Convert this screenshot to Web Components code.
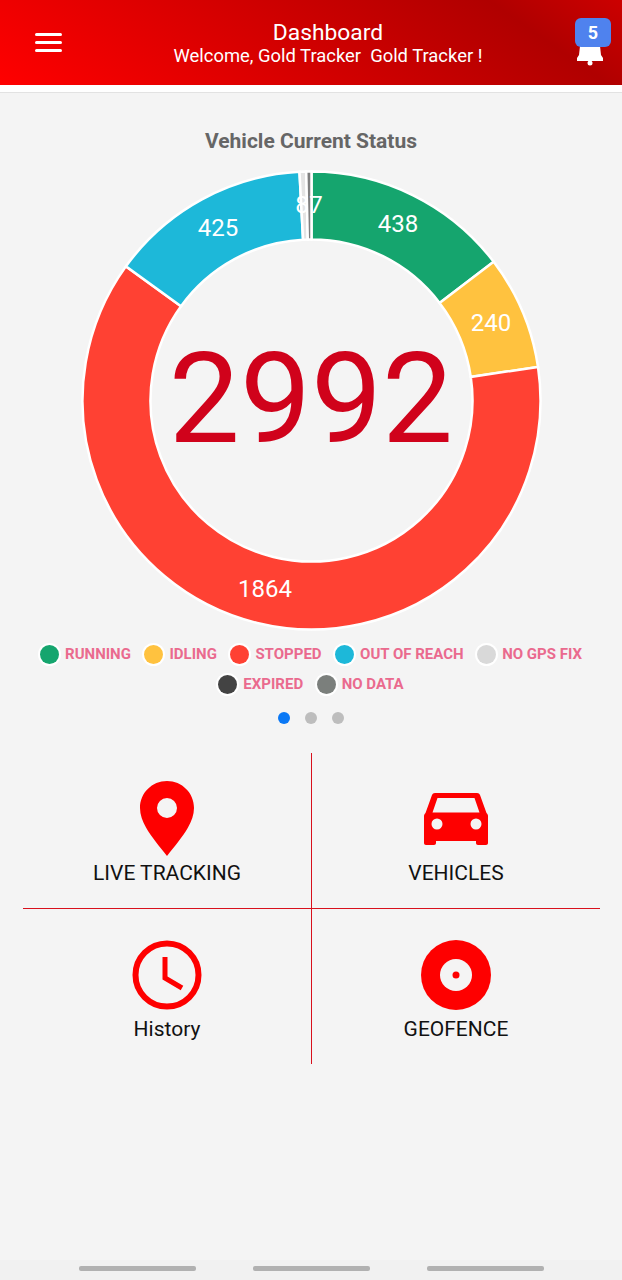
<!DOCTYPE html>
<html lang="en">
<head>
<meta charset="utf-8">
<title>Dashboard</title>
<style>
    html, body {
        margin: 0;
        padding: 0;
    }
    body {
        width: 622px;
        height: 1280px;
        overflow: hidden;
        background: #f4f4f4;
        font-family: Roboto, "Liberation Sans", sans-serif;
        display: flex;
        flex-direction: column;
    }
</style>
</head>
<body>
<app-header title-text="Dashboard" sub-text="Welcome, Gold Tracker  Gold Tracker !" count="5"></app-header>
<status-chart></status-chart>
<status-legend></status-legend>
<pager-dots></pager-dots>
<tile-grid>
    <tile-item label="LIVE TRACKING">
        <svg width="54" height="75" viewBox="0 0 54 75">
            <path fill="#fe0000" fill-rule="evenodd" d="M27 0C12 0 0 12 0 27c0 7 2.500 13 6 19.500C11 55.500 20 66 27 75c7-9 16-19.500 21-28.500 3.500-6.500 6-12.500 6-19.500C54 12 42 0 27 0zm0 17a10 10 0 1 1 0 20 10 10 0 0 1 0-20z"/>
        </svg>
    </tile-item>
    <tile-item label="VEHICLES">
        <svg style="display:block;margin-bottom:11px" width="64" height="52" viewBox="0 0 64 52">
            <path fill="#fe0000" fill-rule="evenodd" d="M11 0h42c1.500 0 2.500.800 3 2l6.500 18c1 .800 1.500 2 1.500 3v27c0 1.200-.800 2-2 2h-8c-1.200 0-2-.800-2-2v-2H12v2c0 1.200-.800 2-2 2H2c-1.200 0-2-.800-2-2V23c0-1 .500-2.200 1.500-3L8 2c.500-1.200 1.500-2 3-2zm2.500 5L8.500 19.500h47L50.500 5h-37zM13 25.500a5.500 5.500 0 1 0 0 11 5.500 5.500 0 0 0 0-11zm39 0a5.500 5.500 0 1 0 0 11 5.500 5.500 0 0 0 0-11z"/>
        </svg>
    </tile-item>
    <tile-item label="History" low>
        <svg width="70" height="70" viewBox="0 0 70 70">
            <circle cx="35" cy="35" r="31.500" fill="none" stroke="#fe0000" stroke-width="6"/>
            <path fill="none" stroke="#fe0000" stroke-width="5" d="M33 17v21l17 10"/>
        </svg>
    </tile-item>
    <tile-item label="GEOFENCE" low>
        <svg width="70" height="70" viewBox="0 0 70 70">
            <circle cx="35" cy="35" r="35" fill="#fe0000"/>
            <circle cx="35" cy="35" r="16" fill="#f4f4f4"/>
            <circle cx="35" cy="35" r="3.500" fill="#fe0000"/>
        </svg>
    </tile-item>
</tile-grid>
<nav-hints></nav-hints>

<script>
// top red bar
class appHeader extends HTMLElement {
    constructor() {
        super();
        this.attachShadow({ mode: 'open' });
        this.shadowRoot.innerHTML = `
            <style>
                :host {
                    display: block;
                    flex: none;
                    border-bottom: 1px solid #e2e2e2;
                    background: #fff;
                    padding-bottom: 7px;
                }
                .bar {
                    height: 85px;
                    display: flex;
                    align-items: center;
                    padding: 0 11px 0 35px;
                    color: #fff;
                    background: linear-gradient(215deg, #cc0000 0%, #b00000 18%, #ff0000 100%);
                }
                .menu {
                    width: 27px;
                    display: flex;
                    flex-direction: column;
                    gap: 5px;
                    margin-top: -1px;
                }
                .menu i {
                    display: block;
                    height: 3px;
                    border-radius: 1.500px;
                    background: #fff;
                }
                .titles {
                    flex: 1;
                    text-align: center;
                    padding-left: 19px;
                    margin-top: 1px;
                }
                .title {
                    font-size: 22.800px;
                    line-height: 25px;
                }
                .sub {
                    font-size: 18.400px;
                    line-height: 21px;
                    white-space: pre;
                }
                .bell {
                    width: 36px;
                    height: 48px;
                    position: relative;
                    margin-top: -1px;
                }
                .bell svg {
                    position: absolute;
                    left: 2px;
                    top: 28px;
                }
                .badge {
                    position: absolute;
                    left: 0;
                    top: 0;
                    width: 36px;
                    height: 29px;
                    border-radius: 6px;
                    background: #4f82ee;
                    font-size: 18px;
                    font-weight: 700;
                    line-height: 29px;
                    text-align: center;
                }
            </style>
            <div class="bar">
                <div class="menu"><i></i><i></i><i></i></div>
                <div class="titles">
                    <div class="title"></div>
                    <div class="sub"></div>
                </div>
                <div class="bell">
                    <svg width="26" height="20" viewBox="0 0 26 20">
                        <path fill="#fff" d="M3 0h20l1 9 2 3v3H0v-3l2-3z"/>
                        <circle cx="13" cy="17" r="2.500" fill="#fff"/>
                    </svg>
                    <div class="badge"></div>
                </div>
            </div>
        `;
    }

    connectedCallback() {
        this.shadowRoot.querySelector('.title').textContent = this.getAttribute('title-text');
        this.shadowRoot.querySelector('.sub').textContent = this.getAttribute('sub-text');
        this.shadowRoot.querySelector('.badge').textContent = this.getAttribute('count');
    }
}
customElements.define('app-header', appHeader);

// heading + donut
class statusChart extends HTMLElement {
    constructor() {
        super();
        this.attachShadow({ mode: 'open' });

        // x/y of the labels are page coordinates, same as the viewBox below
        const slices = [
            { value: 438, color: '#15a56e', label: '438', x: 398, y: 224 },
            { value: 240, color: '#ffc23f', label: '240', x: 491, y: 323 },
            { value: 1864, color: '#ff4133', label: '1864', x: 265, y: 589 },
            { value: 425, color: '#1db8d9', label: '425', x: 218, y: 228 },
            { value: 14, color: '#e4e4e4', label: '8', x: 302, y: 205 },
            { value: 11, color: '#7f7f7f', label: '7', x: 316, y: 205 },
        ];
        const total = 2992;
        const cx = 311.5;
        const cy = 400.5;
        const outer = 229;
        const inner = 161;
        const pt = (r, a) => `${(cx + r * Math.sin(a)).toFixed(2)} ${(cy - r * Math.cos(a)).toFixed(2)}`;

        let start = 0;
        let paths = '';
        let labels = '';
        slices.forEach((s) => {
            const end = start + (s.value / total) * Math.PI * 2;
            const big = end - start > Math.PI ? 1 : 0;
            paths += `<path fill="${s.color}" stroke="#fff" stroke-width="2.500"
                d="M${pt(outer, start)} A${outer} ${outer} 0 ${big} 1 ${pt(outer, end)}
                   L${pt(inner, end)} A${inner} ${inner} 0 ${big} 0 ${pt(inner, start)}Z"/>`;
            labels += `<text x="${s.x}" y="${s.y}" dy=".35em">${s.label}</text>`;
            start = end;
        });

        this.shadowRoot.innerHTML = `
            <style>
                :host {
                    display: block;
                    flex: none;
                }
                h2 {
                    margin: 0;
                    padding-top: 36px;
                    height: 23px;
                    font-size: 21px;
                    line-height: 24px;
                    font-weight: 700;
                    text-align: center;
                    color: #666;
                }
                svg {
                    display: block;
                }
                text {
                    font-family: Roboto, "Liberation Sans", sans-serif;
                    font-size: 24px;
                    fill: #fff;
                    text-anchor: middle;
                }
                text.total {
                    font-size: 126.500px;
                    fill: #d0021b;
                }
            </style>
            <h2>Vehicle Current Status</h2>
            <svg width="622" height="487" viewBox="0 152 622 487">
                ${paths}
                ${labels}
                <text class="total" x="311" y="442">2992</text>
            </svg>
        `;
    }
}
customElements.define('status-chart', statusChart);

// legend below the donut
class statusLegend extends HTMLElement {
    constructor() {
        super();
        this.attachShadow({ mode: 'open' });

        const items = [
            ['RUNNING', '#15a56e'],
            ['IDLING', '#ffc23f'],
            ['STOPPED', '#ff4133'],
            ['OUT OF REACH', '#1db8d9'],
            ['NO GPS FIX', '#d9d9d9'],
            ['EXPIRED', '#434343'],
            ['NO DATA', '#7b7f7c'],
        ];

        this.shadowRoot.innerHTML = `
            <style>
                :host {
                    display: flex;
                    flex: none;
                    flex-wrap: wrap;
                    justify-content: center;
                    gap: 0 13.500px;
                    width: 580px;
                    margin: 0 auto;
                }
                .item {
                    display: flex;
                    align-items: center;
                    gap: 6px;
                    height: 30px;
                    font-size: 15px;
                    font-weight: 700;
                    color: #ea6a8e;
                }
                .dot {
                    width: 19px;
                    height: 19px;
                    border-radius: 50%;
                    box-shadow: 0 0 0 2px #fff;
                }
            </style>
            ${items.map(([name, color]) => `
                <div class="item"><span class="dot" style="background:${color}"></span>${name}</div>
            `).join('')}
        `;
    }
}
customElements.define('status-legend', statusLegend);

// carousel dots
class pagerDots extends HTMLElement {
    constructor() {
        super();
        this.attachShadow({ mode: 'open' });
        this.shadowRoot.innerHTML = `
            <style>
                :host {
                    display: flex;
                    flex: none;
                    justify-content: center;
                    gap: 15px;
                    margin-top: 13px;
                }
                i {
                    width: 12px;
                    height: 12px;
                    border-radius: 50%;
                    background: #bdbdbd;
                }
                i:first-of-type {
                    background: #0a78f5;
                }
            </style>
            <i></i><i></i><i></i>
        `;
    }
}
customElements.define('pager-dots', pagerDots);

// the 2x2 cross
class tileGrid extends HTMLElement {
    constructor() {
        super();
        this.attachShadow({ mode: 'open' });
        this.shadowRoot.innerHTML = `
            <style>
                :host {
                    display: grid;
                    flex: none;
                    grid-template-columns: 289px 288px;
                    grid-template-rows: 156px 155px;
                    width: 577px;
                    margin: 29px 0 0 23px;
                }
                ::slotted(:nth-child(odd)) {
                    border-right: 1px solid #d8101c;
                }
                ::slotted(:nth-child(-n+2)) {
                    border-bottom: 1px solid #d8101c;
                }
            </style>
            <slot></slot>
        `;
    }
}
customElements.define('tile-grid', tileGrid);

class tileItem extends HTMLElement {
    constructor() {
        super();
        this.attachShadow({ mode: 'open' });
        this.shadowRoot.innerHTML = `
            <style>
                :host {
                    display: flex;
                    flex-direction: column;
                    align-items: center;
                    justify-content: flex-end;
                    box-sizing: border-box;
                    padding-bottom: 23px;
                    color: #111;
                }
                :host([low]) {
                    justify-content: flex-start;
                    padding: 31px 0 0;
                }
                .icon {
                    flex: none;
                    line-height: 0;
                }
                .label {
                    font-size: 21px;
                    line-height: 24px;
                    margin-top: 5px;
                }
                :host([low]) .label {
                    margin-top: 7px;
                }
            </style>
            <div class="icon"><slot></slot></div>
            <div class="label"></div>
        `;
    }

    connectedCallback() {
        this.shadowRoot.querySelector('.label').textContent = this.getAttribute('label');
    }
}
customElements.define('tile-item', tileItem);

// grey bars at the very bottom
class navHints extends HTMLElement {
    constructor() {
        super();
        this.attachShadow({ mode: 'open' });
        this.shadowRoot.innerHTML = `
            <style>
                :host {
                    display: flex;
                    flex: none;
                    justify-content: center;
                    gap: 57px;
                    margin-top: auto;
                    padding: 6px 0 9px;
                    background: #f1f1f1;
                }
                i {
                    width: 117px;
                    height: 5px;
                    border-radius: 2px;
                    background: #b1b1b1;
                }
            </style>
            <i></i><i></i><i></i>
        `;
    }
}
customElements.define('nav-hints', navHints);
</script>
</body>
</html>
